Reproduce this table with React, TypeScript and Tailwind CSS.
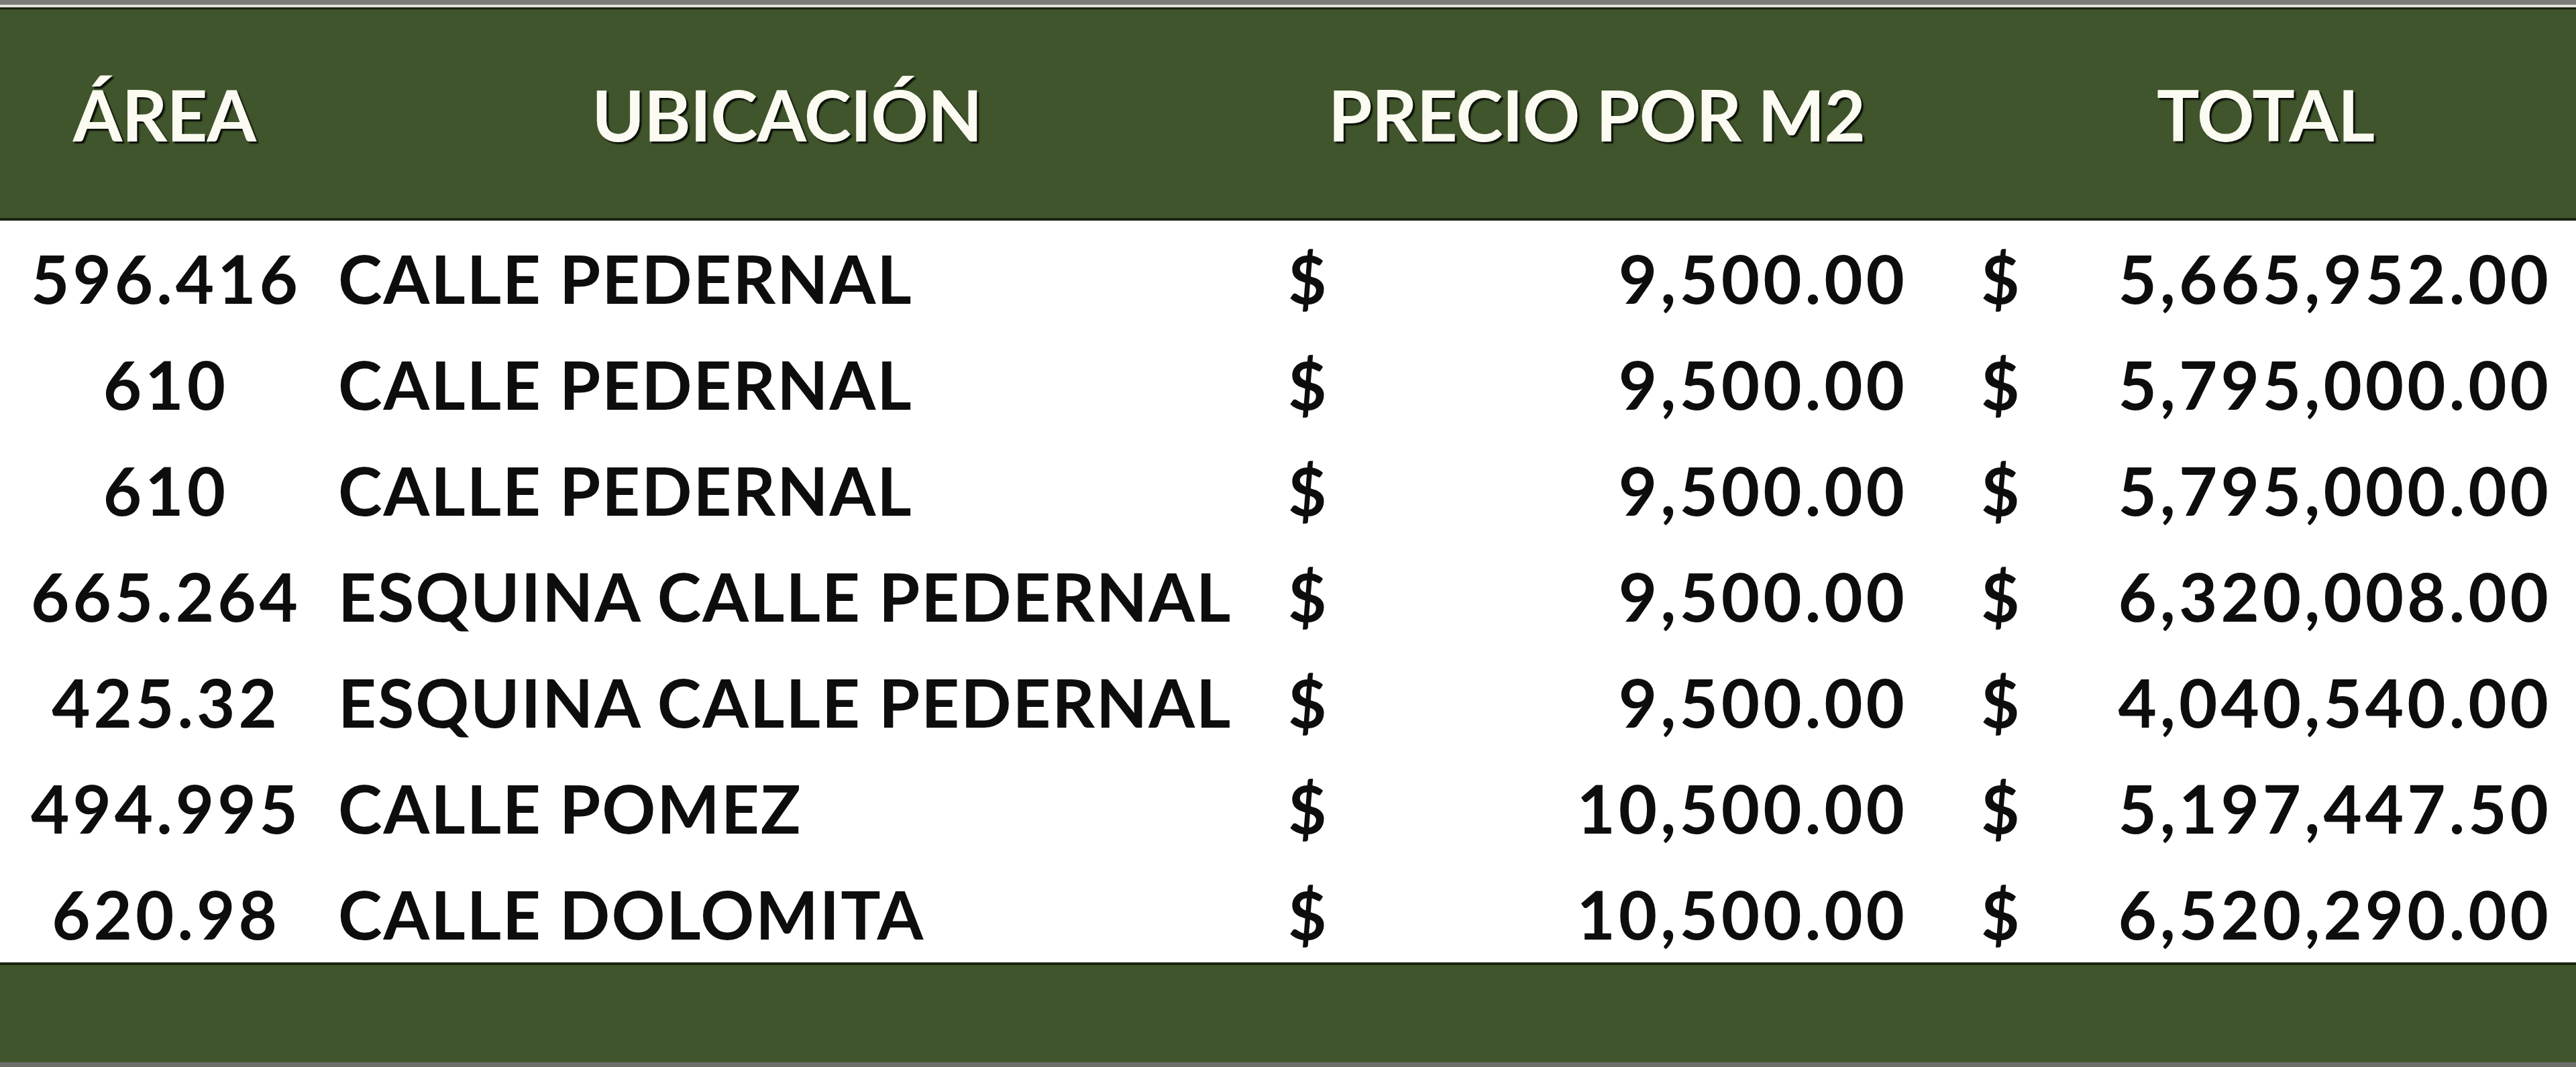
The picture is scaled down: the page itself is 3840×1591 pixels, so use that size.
const rows = [
  { area: "596.416", calle: "CALLE PEDERNAL", precio: "9,500.00", total: "5,665,952.00" },
  { area: "610", calle: "CALLE PEDERNAL", precio: "9,500.00", total: "5,795,000.00" },
  { area: "610", calle: "CALLE PEDERNAL", precio: "9,500.00", total: "5,795,000.00" },
  { area: "665.264", calle: "ESQUINA CALLE PEDERNAL", precio: "9,500.00", total: "6,320,008.00" },
  { area: "425.32", calle: "ESQUINA CALLE PEDERNAL", precio: "9,500.00", total: "4,040,540.00" },
  { area: "494.995", calle: "CALLE POMEZ", precio: "10,500.00", total: "5,197,447.50" },
  { area: "620.98", calle: "CALLE DOLOMITA", precio: "10,500.00", total: "6,520,290.00" },
];

const cols = "grid grid-cols-[490px_1410px_960px_980px]";

export default function App() {
  return (
    <div className="flex h-[1591px] w-[3840px] flex-col overflow-hidden bg-white font-['Lato',sans-serif] font-bold">
      <div className="h-[7px] bg-[#7b7b78]" />
      <div className="h-[4px] bg-[#e2e2dc]" />
      <div className="h-[3px] bg-[#18200f]" />

      <div
        className={`${cols} h-[311px] items-center bg-[#40552b] text-[106px] leading-none tracking-[-1px] text-[#fbfbf2] [text-shadow:3px_3px_2px_#0c100a]`}
      >
        <div className="text-center">ÁREA</div>
        <div className="pr-[44px] text-center">UBICACIÓN</div>
        <div className="text-center">PRECIO POR M2</div>
        <div className="pl-[54px] text-center">TOTAL</div>
      </div>
      <div className="h-[4px] bg-[#1b2410]" />

      <div className="flex h-[1106px] flex-col text-[99px] leading-none tracking-[2px] text-[#0d0d0d]">
        {rows.map((r, i) => (
          <div key={i} className={`${cols} h-[158px] items-center pt-[12px]`}>
            <div className="pl-[5px] text-center tracking-[5px]">{r.area}</div>
            <div className="pl-[14px] whitespace-nowrap">{r.calle}</div>
            <div className="flex justify-between pl-[20px] pr-[16px]">
              <span>$</span>
              <span className="tracking-[5px]">{r.precio}</span>
            </div>
            <div className="flex justify-between pl-[93px] pr-[36px]">
              <span>$</span>
              <span className="tracking-[5px]">{r.total}</span>
            </div>
          </div>
        ))}
      </div>

      <div className="h-[4px] bg-[#1b2410]" />
      <div className="h-[145px] bg-[#40552b]" />
      <div className="h-[7px] bg-[#6d6d68]" />
    </div>
  );
}
